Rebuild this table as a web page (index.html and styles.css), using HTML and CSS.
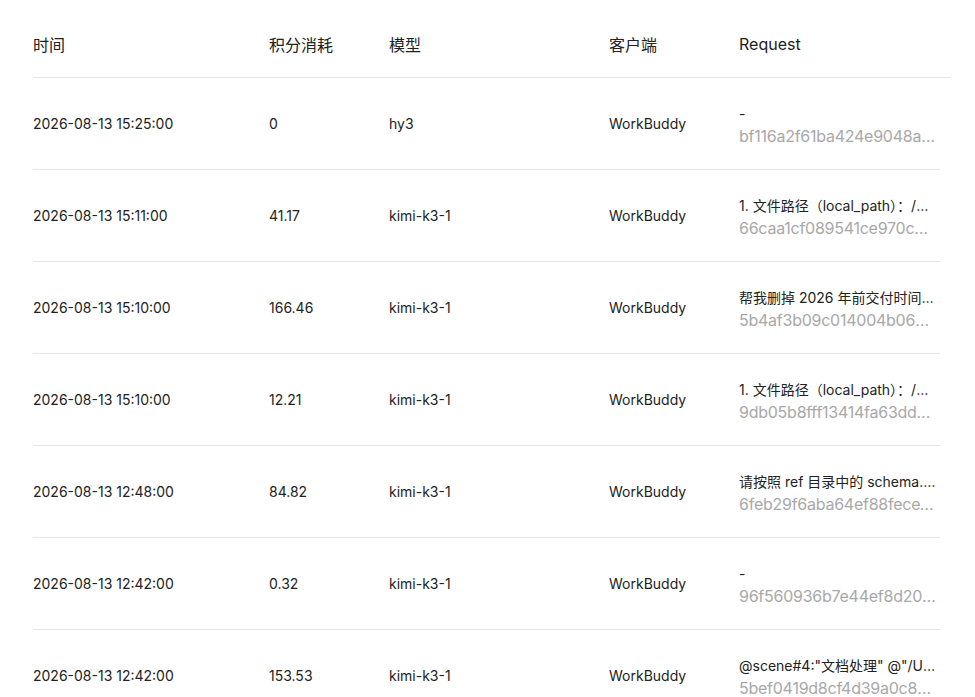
FILE: index.html
```html
<!DOCTYPE html>
<html lang="zh-CN">
<head>
<meta charset="utf-8">
<title>积分消耗记录</title>
<link rel="stylesheet" href="styles.css">
</head>
<body>
<div class="table">
  <div class="head">
    <div class="th">时间</div>
    <div class="th">积分消耗</div>
    <div class="th">模型</div>
    <div class="th">客户端</div>
    <div class="th">Request</div>
  </div>
  <div class="body">
    <div class="row">
      <div class="td">2026-08-13 15:25:00</div>
      <div class="td">0</div>
      <div class="td">hy3</div>
      <div class="td">WorkBuddy</div>
      <div class="td req"><div class="q">-</div><div class="id">bf116a2f61ba424e9048a3c7d2e1f0b9</div></div>
    </div>
    <div class="row">
      <div class="td">2026-08-13 15:11:00</div>
      <div class="td">41.17</div>
      <div class="td">kimi-k3-1</div>
      <div class="td">WorkBuddy</div>
      <div class="td req"><div class="q">1. 文件路径（local_path）：/Users/data</div><div class="id">66caa1cf089541ce970c2b8d1e4f7a63</div></div>
    </div>
    <div class="row">
      <div class="td">2026-08-13 15:10:00</div>
      <div class="td">166.46</div>
      <div class="td">kimi-k3-1</div>
      <div class="td">WorkBuddy</div>
      <div class="td req"><div class="q">帮我删掉 2026 年前交付时间的记录</div><div class="id">5b4af3b09c014004b0682e7f9a1c3d5e</div></div>
    </div>
    <div class="row">
      <div class="td">2026-08-13 15:10:00</div>
      <div class="td">12.21</div>
      <div class="td">kimi-k3-1</div>
      <div class="td">WorkBuddy</div>
      <div class="td req"><div class="q">1. 文件路径（local_path）：/Users/data</div><div class="id">9db05b8fff13414fa63dd7e2c1b0a984</div></div>
    </div>
    <div class="row">
      <div class="td">2026-08-13 12:48:00</div>
      <div class="td">84.82</div>
      <div class="td">kimi-k3-1</div>
      <div class="td">WorkBuddy</div>
      <div class="td req"><div class="q">请按照 ref 目录中的 schema.json 生成</div><div class="id">6feb29f6aba64ef88fece1d2a3b4c5d6</div></div>
    </div>
    <div class="row">
      <div class="td">2026-08-13 12:42:00</div>
      <div class="td">0.32</div>
      <div class="td">kimi-k3-1</div>
      <div class="td">WorkBuddy</div>
      <div class="td req"><div class="q">-</div><div class="id">96f560936b7e44ef8d20a1b2c3d4e5f6</div></div>
    </div>
    <div class="row">
      <div class="td">2026-08-13 12:42:00</div>
      <div class="td">153.53</div>
      <div class="td">kimi-k3-1</div>
      <div class="td">WorkBuddy</div>
      <div class="td req"><div class="q">@scene#4:"文档处理" @"/Users/docs"</div><div class="id">5bef0419d8cf4d39a0c8e7f6a5b4c3d2</div></div>
    </div>
  </div>
</div>
</body>
</html>
```
FILE: styles.css
```css
html, body {
  margin: 0;
  padding: 0;
  background: #ffffff;
}
body {
  font-family: Inter, "Noto Sans CJK SC", sans-serif;
  color: #222222;
}
.table {
  margin-left: 33px;
}
.head,
.row {
  display: grid;
  grid-template-columns: 236px 120px 220px 130px 1fr;
  align-items: center;
}
.head {
  width: 918px;
  height: 66px;
  padding-top: 11px;
  border-bottom: 1px solid #e6e6e6;
  font-size: 16px;
}
.row {
  width: 907px;
  height: 91px;
  border-bottom: 1px solid #e6e6e6;
  font-size: 14px;
}
.td {
  white-space: nowrap;
}
.req {
  min-width: 0;
  line-height: 22px;
  padding-top: 2px;
  padding-right: 3px;
}
.q,
.id {
  overflow: hidden;
  text-overflow: ellipsis;
  white-space: nowrap;
}
.q {
  font-size: 14px;
  color: #222222;
}
.id {
  font-size: 16px;
  letter-spacing: -0.25px;
  color: #a8a8a8;
}
```
